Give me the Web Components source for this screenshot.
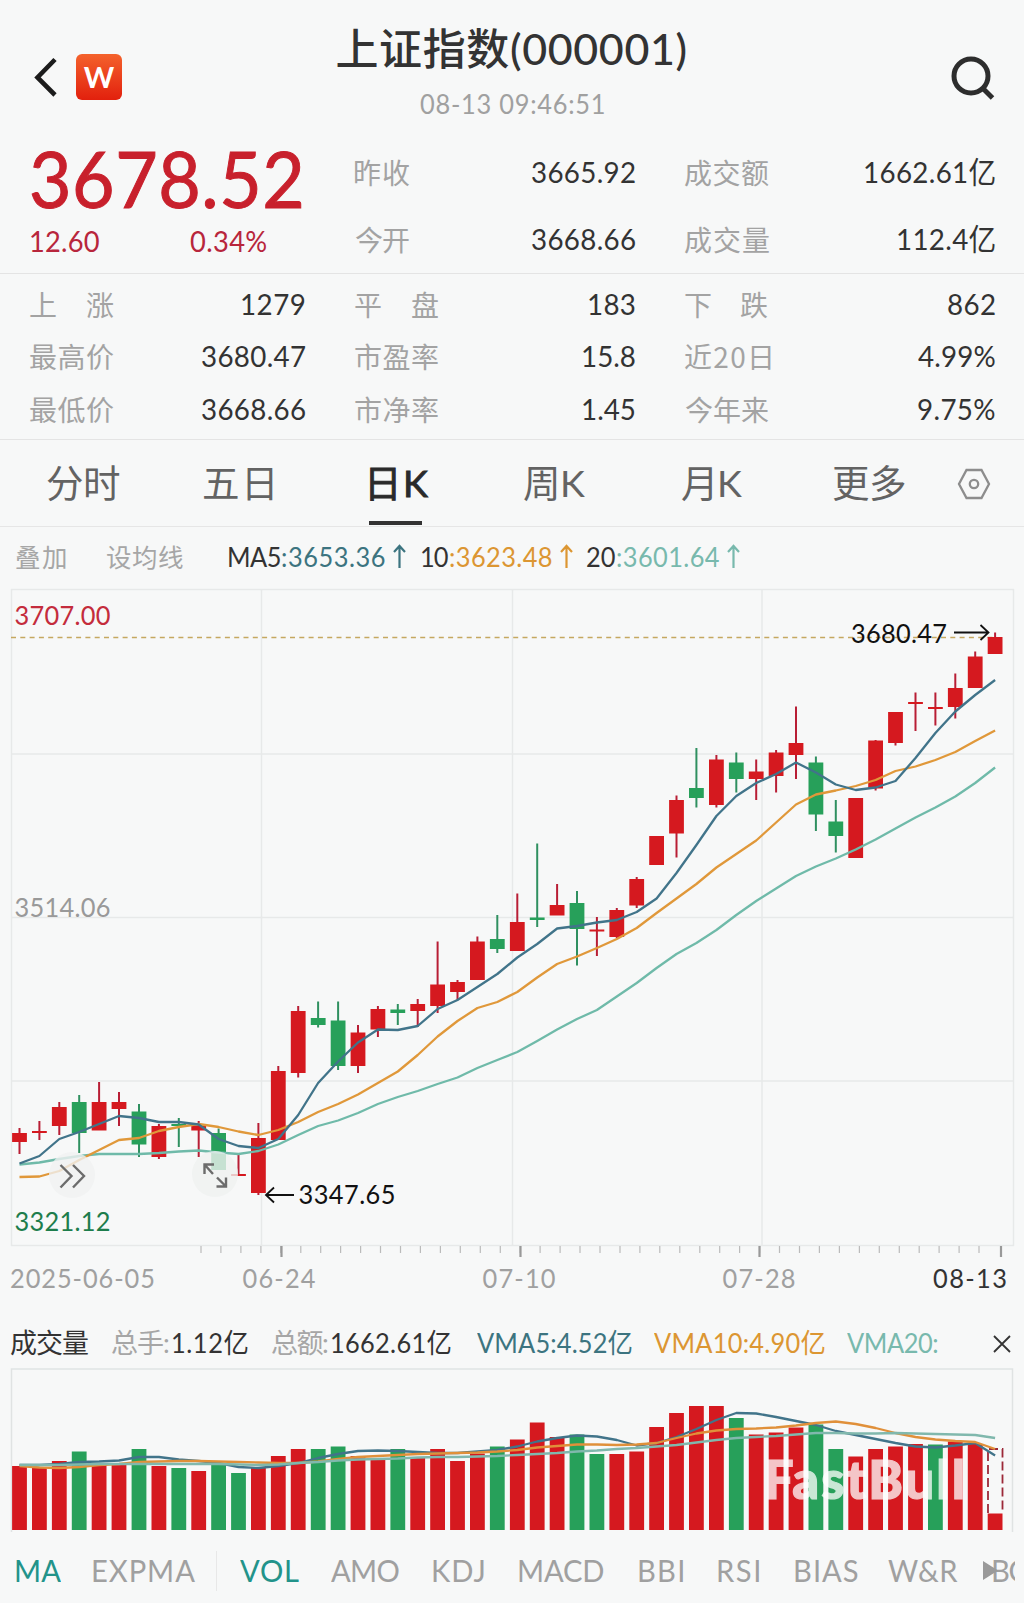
<!DOCTYPE html>
<html lang="zh-CN">
<head>
<meta charset="utf-8">
<title>上证指数</title>
<style>
  body {
    margin: 0;
    background: #f7f8f8;
    color: #333;
    font-family: Lato, "Noto Sans CJK SC", sans-serif;
  }
</style>
</head>
<body>
<index-page></index-page>

<script>
////////////////////
// helpers
////////////////////
const pen = document.createElement("canvas").getContext("2d");

const make = (name, css, html, after) => {
  customElements.define(name, class extends HTMLElement {
    constructor() {
      super();
      this.attachShadow({ mode: "open" });
    }

    connectedCallback() {
      const markup = typeof html === "function" ? html(this) : html;
      this.shadowRoot.innerHTML = `<style>${css}</style>${markup}`;
      if (after) after(this);
    }
  });
};

////////////////////
// fit-text: tracks its text so that the ink is w pixels wide
// figures and latin are drawn slightly condensed
////////////////////
make("fit-text", `
  :host { display: block; flex: none; white-space: nowrap; }
  span { display: block; transform-origin: 0 0; }
`, "<span><slot></slot></span>", (el) => {
  const w = Number(el.getAttribute("w"));
  const text = el.textContent;
  const span = el.shadowRoot.querySelector("span");
  const cs = getComputedStyle(el);
  const squeeze = /^[\x20-\x7e]/.test(text) ? 0.94 : 1;
  pen.font = `${cs.fontWeight} ${cs.fontSize} ${cs.fontFamily}`;
  const m = pen.measureText(text);
  const ink = m.actualBoundingBoxRight + m.actualBoundingBoxLeft;
  el.style.width = w + "px";
  span.style.marginLeft = m.actualBoundingBoxLeft * squeeze + "px";
  if (squeeze !== 1) span.style.transform = `scaleX(${squeeze})`;
  if (text.length > 1) {
    span.style.letterSpacing = (w / squeeze - ink) / (text.length - 1) + "px";
  }
});

////////////////////
// header
////////////////////
make("index-header", `
  :host { display: grid; grid-template-columns: 337px 349px 1fr; height: 130px; }
  .left { display: flex; align-items: center; gap: 19px; padding: 23px 0 0 33px; }
  .logo {
    width: 46px; height: 46px; border-radius: 6px; color: #fff;
    background: linear-gradient(#f4622c, #e2200d);
    font: 700 29px/46px Lato; text-align: center;
  }
  .title { display: flex; flex-direction: column; align-items: center; }
  .name { font-size: 43px; font-weight: 500; line-height: 60px; margin-top: 19px; }
  .time { font-size: 27px; line-height: 36px; margin-top: 7px; color: #a0a0a0; }
  .right { display: flex; align-items: center; justify-content: flex-end; padding: 25px 29px 0 0; }
`, `
  <div class="left">
    <svg width="24" height="40" viewBox="0 0 24 40" fill="none" stroke="#1c1c1c" stroke-width="4.600"><path d="M22 2.500 4.500 20.500 22 38"/></svg>
    <div class="logo">W</div>
  </div>
  <div class="title">
    <fit-text class="name" w="348">上证指数(000001)</fit-text>
    <fit-text class="time" w="184">08-13 09:46:51</fit-text>
  </div>
  <div class="right">
    <svg width="44" height="44" viewBox="0 0 44 44" fill="none" stroke="#2d2d2d" stroke-width="5"><circle cx="20" cy="20" r="17"/><path d="M31.500 32 41.500 42"/></svg>
  </div>
`);

////////////////////
// quote figures
////////////////////
make("stat-item", `
  :host { display: flex; justify-content: space-between; font-size: 29.500px; line-height: 40px; color: #333; }
  .label { color: #a3a3a3; font-size: 28px; font-family: "Noto Sans CJK SC"; margin-left: -1px; }
`, (el) => `
  <fit-text class="label" w="${el.getAttribute("lw")}">${el.getAttribute("label")}</fit-text>
  <fit-text w="${el.getAttribute("vw")}">${el.getAttribute("value")}</fit-text>
`);

make("quote-board", `
  :host { display: block; }
  .top, .rows {
    display: grid; grid-template-columns: 274px 279px 309px; column-gap: 51px;
    padding-left: 31px; border-bottom: 1px solid #e4e4e4;
  }
  .top { height: 144px; box-sizing: border-box; }
  .pair { display: flex; flex-direction: column; gap: 27px; padding-top: 22px; }
  .price { color: #c8202c; font-size: 78px; line-height: 94px; margin: 1px 0 0 1px; -webkit-text-stroke: 1px; }
  .change { display: flex; gap: 91px; color: #b8263c; font-size: 29px; line-height: 36px; margin-top: -2px; }
  .rows { grid-auto-rows: 52.300px; align-items: center; padding-top: 4px; padding-bottom: 4px; }
`, `
  <div class="top">
    <div>
      <fit-text class="price" w="269">3678.52</fit-text>
      <div class="change"><fit-text w="68">12.60</fit-text><fit-text w="76">0.34%</fit-text></div>
    </div>
    <div class="pair">
      <stat-item label="昨收" lw="54" value="3665.92" vw="103"></stat-item>
      <stat-item label="今开" lw="54" value="3668.66" vw="103"></stat-item>
    </div>
    <div class="pair">
      <stat-item label="成交额" lw="84" value="1662.61亿" vw="130"></stat-item>
      <stat-item label="成交量" lw="84" value="112.4亿" vw="97"></stat-item>
    </div>
  </div>
  <div class="rows">
    <stat-item label="上　涨" lw="84" value="1279" vw="63"></stat-item>
    <stat-item label="平　盘" lw="83" value="183" vw="46"></stat-item>
    <stat-item label="下　跌" lw="83" value="862" vw="47"></stat-item>
    <stat-item label="最高价" lw="84" value="3680.47" vw="103"></stat-item>
    <stat-item label="市盈率" lw="83" value="15.8" vw="52"></stat-item>
    <stat-item label="近20日" lw="86" value="4.99%" vw="77"></stat-item>
    <stat-item label="最低价" lw="84" value="3668.66" vw="103"></stat-item>
    <stat-item label="市净率" lw="83" value="1.45" vw="52"></stat-item>
    <stat-item label="今年来" lw="84" value="9.75%" vw="77"></stat-item>
  </div>
`);

////////////////////
// period tabs and the average line legend
////////////////////
make("period-tabs", `
  :host {
    display: flex; height: 87px; box-sizing: border-box; padding-left: 47px;
    border-bottom: 1px solid #e6e6e6; color: #636363; font-size: 37.500px; line-height: 86px;
  }
  fit-text + fit-text { margin-left: 84px; }
  .tab { position: relative; margin-left: 97px; }
  .tab fit-text { color: #2a2a2a; -webkit-text-stroke: .9px; }
  .tab::after { content: ""; position: absolute; left: -1px; bottom: 1px; width: 53px; height: 4px; background: #333; }
  .tab + fit-text { margin-left: 96px; }
  fit-text.month { margin-left: 97px; }
  fit-text.more { margin-left: 91px; }
  svg { margin: 28px 0 0 52px; }
`, `
  <fit-text w="73">分时</fit-text>
  <fit-text w="69">五日</fit-text>
  <div class="tab"><fit-text w="58">日K</fit-text></div>
  <fit-text w="61">周K</fit-text>
  <fit-text class="month" w="60">月K</fit-text>
  <fit-text class="more" w="72">更多</fit-text>
  <svg width="34" height="32" viewBox="0 0 34 32" fill="none" stroke="#8d8d8d" stroke-width="2.300"><path d="M9.500 2h15L32 16l-7.500 14h-15L2 16z"/><circle cx="17" cy="16" r="4.200"/></svg>
`);

make("ma-legend", `
  :host { display: flex; height: 61px; box-sizing: border-box; padding-left: 16px; font-size: 27px; line-height: 60px; }
  .grey { color: #a6a6a6; font: 25.500px/58px "Noto Sans CJK SC"; }
  .set { margin: 0 46px 0 41px; }
  .c5 { color: #3c7480; } .c10 { color: #dc9632; } .c20 { color: #78b9ad; }
  .val { margin-left: 2px; }
  .next { margin-left: 16px; }
  svg { margin: 17px 0 0 8px; fill: none; stroke: currentColor; stroke-width: 2.200; }
`, `
  <fit-text class="grey" w="50">叠加</fit-text>
  <fit-text class="grey set" w="76">设均线</fit-text>
  <fit-text w="51">MA5</fit-text><fit-text class="c5 val" w="103">:3653.36</fit-text>
  <svg class="c5" width="13" height="24" viewBox="0 0 13 24"><path d="M6.500 24V2M1 8l5.500-6L12 8"/></svg>
  <fit-text class="next" w="26">10</fit-text><fit-text class="c10 val" w="102">:3623.48</fit-text>
  <svg class="c10" width="13" height="24" viewBox="0 0 13 24"><path d="M6.500 24V2M1 8l5.500-6L12 8"/></svg>
  <fit-text style="margin-left:14px" w="28">20</fit-text><fit-text class="c20 val" w="102">:3601.64</fit-text>
  <svg class="c20" width="13" height="24" viewBox="0 0 13 24"><path d="M6.500 24V2M1 8l5.500-6L12 8"/></svg>
`);

////////////////////
// charts
////////////////////
const RED = "#d5191f";
const GREEN = "#27a05a";
const px = (i) => 19.5 + i * 19.91;
const line = (ys, color) =>
  `<polyline points="${ys.map((y, i) => px(i).toFixed(1) + "," + y).join(" ")}" fill="none" stroke="${color}" stroke-width="2.300" stroke-linejoin="round"/>`;
const label = (x, y, w, text, fill) =>
  `<text transform="translate(${x} ${y}) scale(.94 1)" fill="${fill}" textLength="${w / 0.94}">${text}</text>`;

// colour, high, body top, body bottom, low
const candles = [
  ["r", 1128, 1133, 1142, 1154], ["r", 1121, 1131, 1133, 1140], ["r", 1102, 1107, 1126, 1135],
  ["g", 1095, 1102, 1133, 1153], ["r", 1082, 1102, 1130.5, 1130], ["r", 1092, 1102, 1109, 1126],
  ["g", 1104, 1111.5, 1144.5, 1157], ["r", 1124, 1126, 1157, 1159], ["g", 1118, 1124, 1126, 1147],
  ["r", 1121, 1125.5, 1130.5, 1157], ["g", 1128.5, 1133, 1170, 1170], ["r", 1154, 1174, 1176, 1176],
  ["r", 1123, 1138, 1193, 1195], ["r", 1066, 1071, 1140, 1140], ["r", 1006, 1011, 1073, 1077.5],
  ["g", 1001.5, 1018, 1025, 1027.5], ["g", 1001.5, 1020.5, 1066, 1070], ["r", 1025, 1032.5, 1066, 1073],
  ["r", 1006, 1009, 1029.5, 1037], ["g", 1004, 1009.5, 1013, 1025], ["r", 999, 1004, 1011, 1027],
  ["r", 941.5, 984.5, 1006, 1013], ["r", 980, 982, 992, 1000], ["r", 936.5, 941.5, 980, 980],
  ["g", 915, 939, 949, 953], ["r", 893.5, 922, 951, 951], ["g", 843.5, 917.5, 920, 927],
  ["r", 884, 905, 915.5, 915], ["g", 891, 903, 929, 965.5], ["r", 917, 929.5, 931.5, 956],
  ["r", 908, 910, 937, 938], ["r", 877, 879, 905.5, 908], ["r", 836, 836, 865, 865],
  ["r", 795.5, 800, 833.5, 857.5], ["g", 748, 788, 798, 807.5], ["r", 755, 759.5, 805, 807.5],
  ["g", 752.5, 762.5, 779, 792.5], ["r", 759.5, 771.5, 779, 800], ["r", 750, 752.5, 776, 792.5],
  ["r", 706.5, 743, 755, 779], ["g", 756.5, 762.5, 814.5, 831], ["g", 800, 821.5, 836, 852.5],
  ["r", 798, 798, 858, 858], ["r", 740, 740.5, 788.5, 790.5], ["r", 712, 712, 743, 745.5],
  ["r", 692.5, 702, 704, 731], ["r", 692.5, 707, 709, 725.5], ["r", 673.5, 688, 707, 718.5],
  ["r", 651.5, 656.5, 688, 688], ["r", 632.5, 637, 654, 654]
];
const ma5 = [1163.5, 1156, 1139, 1132, 1124, 1116, 1118, 1122, 1122, 1124.5, 1139, 1146, 1148, 1139, 1115, 1083, 1061.5, 1042.5, 1029.5, 1030, 1026, 1009, 1000, 987, 974, 957.5, 944, 928.5, 926, 922.5, 920, 912, 898.5, 873, 845, 816, 796, 783, 774, 762.5, 772.5, 784.5, 790, 787.5, 781, 758, 733, 711.5, 695, 680];
const ma10 = [1177, 1176.5, 1171, 1160, 1150, 1140, 1138, 1131, 1127, 1124, 1127, 1131.5, 1135, 1130, 1122, 1112, 1104, 1094.5, 1083, 1071.5, 1055, 1036.5, 1021, 1008, 1002, 992, 977.5, 964, 956.5, 948, 939, 928, 913, 898.5, 884, 867.5, 854, 840.5, 822.5, 804.5, 794.5, 790.5, 786, 780, 771, 766.5, 760, 752, 741, 730.5];
const ma20 = [1164.5, 1162.5, 1159, 1156, 1154, 1154, 1154, 1153, 1151.5, 1150.5, 1152.5, 1154, 1151, 1144.5, 1135, 1126, 1120.5, 1113, 1104, 1097, 1091, 1084, 1077.5, 1068, 1060, 1052, 1041, 1029.5, 1019, 1010, 996.5, 983, 968, 954, 943, 930, 915, 901, 888.5, 876, 866.5, 858.5, 849.5, 839.5, 828.5, 817.5, 807.5, 796.5, 783, 767.5];

const ticks = () => {
  let out = "";
  for (let i = 0; i < 40; i++) out += `M${(201 + i * 19.95).toFixed(1)} 1246v7`;
  return out;
};

make("price-chart", `
  :host { display: block; height: 713px; }
  svg { display: block; font-size: 27px; }
`, () => `
<svg width="1024" height="713" viewBox="0 588 1024 713">
  <path d="M11 589.500H1014M11 754H1014M11 917.500H1014M11 1081H1014M11 1245.500H1014M11.500 589V1246M261.500 589V1246M512.500 589V1246M762 589V1246M1013.500 589V1246" stroke="#e7e9e9" stroke-width="1.500" fill="none"/>
  <path d="M11 637.500H995" stroke="#c5a860" stroke-width="1.600" stroke-dasharray="5 4.300"/>
  ${candles.map(([c, h, t, b, l], i) => {
    const f = c === "r" ? RED : GREEN;
    return `<path d="M${px(i).toFixed(1)} ${h}V${l}" stroke="${c === "r" ? "#b81e35" : "#2f9060"}" stroke-width="2"/><rect x="${(px(i) - 7.4).toFixed(1)}" y="${t}" width="14.800" height="${b - t}" fill="${f}"/>`;
  }).join("")}
  ${line(ma20, "#6fbaa9")}${line(ma10, "#e0983a")}${line(ma5, "#41748a")}
  <circle cx="72" cy="1175" r="23" fill="#f0f1f1" fill-opacity=".8"/>
  <circle cx="215" cy="1174" r="23" fill="#eff1f0" fill-opacity=".8"/>
  <g fill="none" stroke="#6c6c6c" stroke-width="2.400">
    <path d="M60.500 1165 71.500 1176 60.500 1187.500M73 1165 84 1176 73 1187.500"/>
    <path d="M204.500 1174V1164.500H214M204.500 1164.500 213 1174M226 1177.500V1186.500H216.500M226 1186.500 217 1177.500"/>
  </g>
  <g fill="none" stroke="#111" stroke-width="1.800">
    <path d="M294 1195H266M274 1187.500 266 1195 274 1202.500M954 632.500H988M980.500 625 988.500 632.500 980.500 640"/>
  </g>
  ${label(14.5, 625, 96, "3707.00", "#c42c3c")}
  ${label(14.5, 917, 96, "3514.06", "#999")}
  ${label(14.5, 1231, 96, "3321.12", "#1d7d4c")}
  ${label(298.5, 1203.5, 97, "3347.65", "#111")}
  ${label(851, 642.5, 96, "3680.47", "#111")}
  <path d="${ticks()}" stroke="#bbb" stroke-width="1.200" fill="none"/>
  <path d="M281.500 1246v11M520.500 1246v11M759.500 1246v11M1001 1246v11" stroke="#999" stroke-width="2.200"/>
  ${label(10, 1287.5, 145, "2025-06-05", "#a0a0a0")}
  ${label(242.5, 1287.5, 73, "06-24", "#a0a0a0")}
  ${label(482.5, 1287.5, 73, "07-10", "#a0a0a0")}
  ${label(722.5, 1287.5, 73, "07-28", "#a0a0a0")}
  ${label(933, 1287.5, 74, "08-13", "#333")}
</svg>`);

make("volume-legend", `
  :host { display: flex; height: 67px; padding-left: 10px; font-size: 27px; line-height: 84px; }
  .grey { color: #a6a6a6; margin-left: 24px; }
  .num { margin-left: 4px; }
  svg { margin: 34px 0 0 auto; padding-right: 13px; }
`, `
  <fit-text w="78">成交量</fit-text>
  <fit-text class="grey" w="57">总手:</fit-text><fit-text class="num" w="75">1.12亿</fit-text>
  <fit-text class="grey" w="56">总额:</fit-text><fit-text class="num" w="119">1662.61亿</fit-text>
  <fit-text style="margin-left:26px;color:#3c7480" w="155">VMA5:4.52亿</fit-text>
  <fit-text style="margin-left:22px;color:#dc9632" w="171">VMA10:4.90亿</fit-text>
  <fit-text style="margin-left:22px;color:#78b9ad" w="91">VMA20:</fit-text>
  <svg width="18" height="18" viewBox="0 0 18 18" stroke="#333" stroke-width="1.800"><path d="M1 1 17 17M17 1 1 17"/></svg>
`);

const volumes = [1466, 1467, 1461, 1451.5, 1465, 1465, 1449, 1466, 1468, 1471, 1464, 1473, 1468, 1456, 1449, 1449, 1446.5, 1456, 1459, 1449, 1458, 1449, 1461, 1453.5, 1446.5, 1439.5, 1422.5, 1437, 1434.5, 1454, 1454, 1451.5, 1427, 1413, 1406, 1406, 1418, 1434.5, 1432.5, 1427.5, 1424.5, 1449, 1456.5, 1449, 1446.5, 1444, 1444.5, 1441.5, 1444, 1513.5];
const falling = [3, 6, 8, 10, 11, 15, 16, 19, 24, 28, 29, 36, 40, 41, 46];
const vma5 = [1465, 1465, 1464, 1462, 1461.5, 1460.5, 1457, 1457, 1459.5, 1461, 1463, 1467, 1468, 1466, 1463, 1458, 1454, 1451, 1450.5, 1451, 1452, 1453, 1453, 1451.5, 1450, 1446.5, 1441.5, 1438, 1435.5, 1436.5, 1440, 1445.5, 1443, 1437, 1429, 1420, 1413, 1413.5, 1417, 1421, 1425, 1431, 1435, 1439, 1443, 1446.5, 1447.5, 1445.5, 1443, 1455.5];
const vma10 = [1466, 1467.5, 1468, 1467, 1465, 1464, 1462, 1461.5, 1461, 1461, 1461.5, 1462, 1462.5, 1463, 1463, 1461.5, 1459, 1457, 1456, 1455, 1454, 1453.5, 1453, 1452.5, 1451.5, 1450, 1447.5, 1446, 1444.5, 1444.5, 1445, 1444.5, 1443, 1438, 1433.5, 1430.5, 1429, 1428.5, 1427.5, 1425.5, 1423, 1421.5, 1424, 1428, 1433, 1437, 1439.5, 1441, 1442, 1449];
const vma20 = [1465, 1465, 1465, 1464.5, 1464, 1464, 1464, 1464, 1464, 1464, 1464, 1464.5, 1465, 1464.5, 1463, 1462, 1460.5, 1459.5, 1459, 1458.5, 1457.5, 1457, 1457, 1456.5, 1456, 1455, 1454, 1453, 1451.5, 1450.5, 1449, 1448, 1446.5, 1445, 1442.5, 1440, 1438, 1437, 1436, 1434.5, 1433, 1433, 1433.5, 1433.5, 1433, 1433.5, 1434, 1434.5, 1435, 1438];

make("volume-chart", `
  :host { display: block; height: 166px; }
  svg { display: block; }
`, () => `
<svg width="1024" height="166" viewBox="0 1368 1024 166">
  <path d="M11.500 1532V1369H1012.500V1532" stroke="#e0e3e3" stroke-width="1.500" fill="none"/>
  ${volumes.map((y, i) => `<rect x="${(px(i) - 7.4).toFixed(1)}" y="${y}" width="14.800" height="${1530 - y}" fill="${falling.includes(i) ? GREEN : RED}"/>`).join("")}
  <path d="M988 1513V1449H1002.500V1513" fill="none" stroke="#9c2838" stroke-width="1.800" stroke-dasharray="9 4"/>
  ${line(vma5, "#41748a")}${line(vma10, "#e0903a")}${line(vma20, "#80b8ad")}
  <text x="764" y="1499" fill="#fff" stroke="#fff" stroke-width="1.200" opacity=".75" font-family="Lato" font-weight="900" font-size="52.500" textLength="201">FastBull</text>
</svg>`);

////////////////////
// indicator picker
////////////////////
make("indicator-tabs", `
  :host { display: flex; height: 69px; width: 1015px; overflow: hidden; color: #a0a0a0; font-size: 31px; line-height: 72px; padding-left: 16px; box-sizing: border-box; }
  .on { color: #22938a; }
  i { width: 1px; height: 40px; margin: 17px 23px 0 21px; background: #e8e8e8; flex: none; }
  svg { flex: none; margin: 27px -5px 0 25px; z-index: 1; }
`, `
  <fit-text class="on" w="45">MA</fit-text>
  <fit-text style="margin-left:32px" w="102">EXPMA</fit-text><i></i>
  <fit-text class="on" w="59">VOL</fit-text>
  <fit-text style="margin-left:32px" w="68">AMO</fit-text>
  <fit-text style="margin-left:34px" w="51">KDJ</fit-text>
  <fit-text style="margin-left:35px" w="85">MACD</fit-text>
  <fit-text style="margin-left:35px" w="44">BBI</fit-text>
  <fit-text style="margin-left:35px" w="41">RSI</fit-text>
  <fit-text style="margin-left:36px" w="63">BIAS</fit-text>
  <fit-text style="margin-left:30px" w="70">W&amp;R</fit-text>
  <svg width="15" height="19" viewBox="0 0 15 19" fill="#9a9a9a"><path d="M0 0 15 9.500 0 19z"/></svg>
  <fit-text w="66">BOLL</fit-text>
`);

make("index-page", `
  :host { display: flex; flex-direction: column; width: 1024px; height: 1603px; overflow: hidden; }
  index-header, quote-board, period-tabs, ma-legend, price-chart, volume-legend, volume-chart, indicator-tabs { flex: none; }
`, `
  <index-header></index-header>
  <quote-board></quote-board>
  <period-tabs></period-tabs>
  <ma-legend></ma-legend>
  <price-chart></price-chart>
  <volume-legend></volume-legend>
  <volume-chart></volume-chart>
  <indicator-tabs></indicator-tabs>
`);
</script>
</body>
</html>
